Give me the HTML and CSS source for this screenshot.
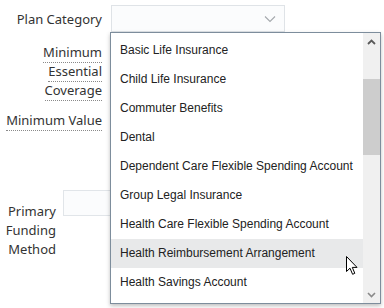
FILE: index.html
```html
<!DOCTYPE html>
<html>
    <head>
        <meta http-equiv='Content-Type' content='text/html; charset=UTF-8'>
        <title>Plan Details</title>
        <link rel="stylesheet" href="styles.css">
    </head>
    <body>
        <div id='form'>
            <div class='row row-plan'>
                <div class='label'>Plan Category</div>
                <div class='select'>
                    <svg class='chevron' width='12' height='8' viewBox='0 0 12 8'><polyline points='1,1.5 6,6.5 11,1.5' fill='none' stroke='#a4a8ac' stroke-width='1.1'/></svg>
                </div>
            </div>
            <div class='row row-mec'>
                <div class='label'><span class='hint'>Minimum</span><br><span class='hint'>Essential</span><br><span class='hint'>Coverage</span></div>
            </div>
            <div class='row row-value'>
                <div class='label'><span class='hint'>Minimum Value</span></div>
            </div>
            <div class='row row-funding'>
                <div class='label label-narrow'>Primary<br>Funding<br>Method</div>
                <div class='input'></div>
            </div>
        </div>

        <div id='dropdown'>
            <ul class='options'>
                <li>Basic Life Insurance</li>
                <li>Child Life Insurance</li>
                <li>Commuter Benefits</li>
                <li>Dental</li>
                <li>Dependent Care Flexible Spending Account</li>
                <li>Group Legal Insurance</li>
                <li>Health Care Flexible Spending Account</li>
                <li class='hover'>Health Reimbursement Arrangement</li>
                <li>Health Savings Account</li>
            </ul>
            <div class='scrollbar'>
                <div class='sb-btn'><svg width='9' height='6' viewBox='0 0 9 6'><polyline points='1,5 4.5,1.5 8,5' fill='none' stroke='#5a5a5a' stroke-width='1.8'/></svg></div>
                <div class='sb-track'><div class='sb-thumb'></div></div>
                <div class='sb-btn'><svg width='9' height='6' viewBox='0 0 9 6'><polyline points='1,1 4.5,4.5 8,1' fill='none' stroke='#8a8a8a' stroke-width='1.6'/></svg></div>
            </div>
        </div>

        <svg id='cursor' width='13' height='20' viewBox='0 0 13 20'><path d='M0.5,0.5 L0.5,15.5 L4,12.2 L6.6,18.3 L8.8,17.3 L6.3,11.4 L11,11.4 Z' fill='#fff' stroke='#000' stroke-width='1' stroke-linejoin='miter'/></svg>
    </body>
</html>
```

FILE: styles.css
```css
body {
    margin: 0;
    background: #fff;
    font-family: "Noto Sans", "Open Sans", sans-serif;
    color: #333;
}
#form {
    padding-top: 5px;
    width: 384px;
}
.row {
    display: flex;
    align-items: flex-start;
}
.label {
    width: 102px;
    text-align: right;
    font-size: 13px;
    line-height: 19px;
}
.hint {
    border-bottom: 1px dotted #8a8a8a;
    padding-bottom: 1px;
}
.row-plan .label {
    padding-top: 5px;
}
.select {
    margin-left: 9px;
    width: 174px;
    height: 27px;
    border: 1px solid #dfe3e7;
    background: #fbfcfd;
    position: relative;
    box-sizing: border-box;
    display: flex;
    align-items: center;
    justify-content: flex-end;
    padding-right: 8px;
}
.row-mec {
    margin-top: 11px;
}
.row-value {
    margin-top: 11px;
}
.row-funding {
    margin-top: 60px;
}
.label-narrow {
    width: 56px;
    margin-top: 12px;
}
.input {
    margin-left: 7px;
    width: 180px;
    height: 26px;
    border: 1px solid #e1e5e9;
    background: #fbfcfd;
    box-sizing: border-box;
}

#dropdown {
    position: absolute;
    left: 110px;
    top: 32px;
    width: 271px;
    height: 272px;
    box-sizing: border-box;
    border: 1px solid #7d8d9c;
    background: #fff;
    box-shadow: 0 2px 4px rgba(0, 0, 0, 0.25);
    display: flex;
}
.options {
    list-style: none;
    margin: 0;
    padding: 3px 0 0 0;
    flex: 1;
    font-family: "Liberation Sans", Arial, sans-serif;
    font-size: 12px;
    color: #222;
}
.options li {
    height: 29px;
    line-height: 29px;
    padding-left: 9px;
    white-space: nowrap;
}
.options li.hover {
    background: #e8e9ea;
}
.scrollbar {
    width: 17px;
    background: #f0f0f0;
    display: flex;
    flex-direction: column;
}
.sb-btn {
    height: 17px;
    display: flex;
    align-items: center;
    justify-content: center;
}
.sb-track {
    flex: 1;
    padding-top: 29px;
}
.sb-thumb {
    height: 76px;
    background: #cdcdcd;
}
#cursor {
    position: absolute;
    left: 346px;
    top: 256px;
}
```
